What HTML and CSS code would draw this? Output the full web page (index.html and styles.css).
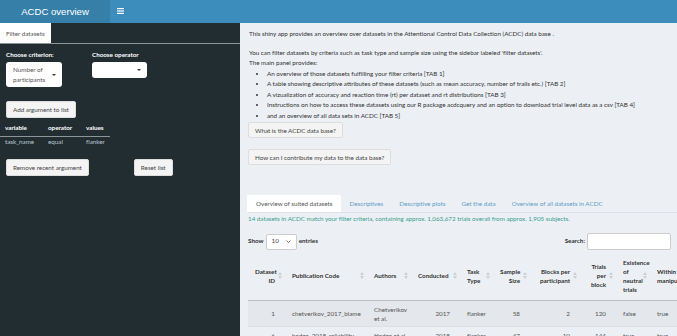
FILE: index.html
```html
<!DOCTYPE html>
<html lang="en">
<head>
    <meta charset="UTF-8">
    <title>ACDC overview</title>
    <link rel="stylesheet" href="styles.css">
</head>
<body>
    <!-- header -->
    <header class="top">
      <div class="logo">ACDC overview</div>
      <nav class="navbar">
        <svg class="burger" width="7" height="6" viewBox="0 0 7 6">
          <rect x="0" y="0" width="7" height="1.2" fill="#fff"/>
          <rect x="0" y="2.4" width="7" height="1.2" fill="#fff"/>
          <rect x="0" y="4.8" width="7" height="1.2" fill="#fff"/>
        </svg>
      </nav>
    </header>

    <div class="wrap">
      <!-- sidebar -->
      <aside class="side">
        <div class="side-tabs">
          <span class="side-tab">Filter datasets</span>
        </div>

        <div class="crit">
          <div class="fg">
            <label>Choose criterion:</label>
            <div class="sel sel-big">
              <span>Number of participants</span>
              <i class="caret"></i>
            </div>
          </div>
          <div class="fg">
            <label>Choose operator</label>
            <div class="sel sel-small">
              <span></span>
              <i class="caret"></i>
            </div>
          </div>
        </div>

        <button class="btn btn-add">Add argument to list</button>

        <table class="argtab">
          <thead>
            <tr><th>variable</th><th>operator</th><th>values</th></tr>
          </thead>
          <tbody>
            <tr><td>task_name</td><td>equal</td><td>flanker</td></tr>
          </tbody>
        </table>

        <div class="side-btns">
          <button class="btn">Remove recent argument</button>
          <button class="btn">Reset list</button>
        </div>
      </aside>

      <!-- main -->
      <main class="content">
        <p class="intro">This shiny app provides an overview over datasets in the Attentional Control Data Collection (ACDC) data base .</p>
        <p class="intro2">You can filter datasets by criteria such as task type and sample size using the sidebar labeled 'filter datasets'.<br>The main panel provides:</p>
        <ul class="feat">
          <li>An overview of those datasets fulfilling your filter criteria [TAB 1]</li>
          <li>A table showing descriptive attributes of these datasets (such as mean accuracy, number of trails etc.) [TAB 2]</li>
          <li>A vizualization of accuracy and reaction time (rt) per dataset and rt distributions [TAB 3]</li>
          <li>Instructions on how to access these datasets using our R package acdcquery and an option to download trial level data as a csv [TAB 4]</li>
          <li>and an overview of all data sets in ACDC [TAB 5]</li>
        </ul>

        <button class="btn btn-main">What is the ACDC data base?</button>
        <button class="btn btn-main btn-second">How can I contribute my data to the data base?</button>

        <ul class="tabs">
          <li class="active">Overview of suited datasets</li>
          <li>Descriptives</li>
          <li>Descriptive plots</li>
          <li>Get the data</li>
          <li>Overview of all datasets in ACDC</li>
        </ul>

        <p class="match">14 datasets in ACDC match your filter criteria, containing approx. 1,063,672 trials overall from approx. 1,905 subjects.</p>

        <div class="dt-top">
          <label class="len">Show <span class="len-sel">10 <svg width="5" height="3" viewBox="0 0 5 3"><path d="M0.5 0.5 L2.5 2.5 L4.5 0.5" fill="none" stroke="#555" stroke-width="0.8"/></svg></span> entries</label>
          <label class="search">Search: <span class="search-box"></span></label>
        </div>

        <table class="dt">
          <colgroup>
            <col style="width:37px"><col style="width:82px"><col style="width:44px"><col style="width:49px"><col style="width:33px">
            <col style="width:37px"><col style="width:50px"><col style="width:36px"><col style="width:34px"><col style="width:60px">
          </colgroup>
          <thead>
            <tr>
              <th class="num">Dataset ID</th>
              <th>Publication Code</th>
              <th>Authors</th>
              <th>Conducted</th>
              <th>Task Type</th>
              <th class="num">Sample Size</th>
              <th class="num">Blocks per participant</th>
              <th class="num">Trials per block</th>
              <th>Existence of neutral trials</th>
              <th>Within manipulation</th>
            </tr>
          </thead>
          <tbody>
            <tr class="odd">
              <td class="num">1</td><td>chetverikov_2017_blame</td><td>Chetverikov et al.</td><td class="num">2017</td><td>flanker</td>
              <td class="num">58</td><td class="num">2</td><td class="num">120</td><td>false</td><td>true</td>
            </tr>
            <tr>
              <td class="num">6</td><td>hedge_2018_reliability</td><td>Hedge et al.</td><td class="num">2018</td><td>flanker</td>
              <td class="num">47</td><td class="num">10</td><td class="num">144</td><td>true</td><td>true</td>
            </tr>
          </tbody>
        </table>
      </main>
    </div>
</body>
</html>
```

FILE: styles.css
```css
 *{
    box-sizing: border-box;
 }
 html, body{
    margin: 0;
    height: 100%;
    overflow: hidden;
 }
 body{
    font-family: Lato, "Noto Sans", sans-serif;
    font-size: 6.3px;
    letter-spacing: -0.02px;
    line-height: 10.5px;
    color: #333;
    background-color: #ecf0f5;
    display: flex;
    flex-direction: column;
 }

 /* header */
 .top{
    display: flex;
    height: 23px;
    flex-shrink: 0;
 }
 .logo{
    width: 110px;
    background-color: #367fa9;
    color: #fff;
    font-family: "Liberation Sans", Arial, sans-serif;
    font-size: 9.6px;
    letter-spacing: normal;
    line-height: 23px;
    text-align: center;
 }
 .navbar{
    flex: 1;
    background-color: #3c8dbc;
    padding: 8px 0 0 7px;
 }
 .burger{
    display: block;
 }

 .wrap{
    flex: 1;
    display: flex;
    min-height: 0;
 }

 /* sidebar */
 .side{
    width: 240px;
    flex-shrink: 0;
    background-color: #222d32;
    color: #b8c7ce;
 }
 .side-tabs{
    height: 21px;
    border-bottom: 1px solid #8d9598;
 }
 .side-tab{
    display: inline-block;
    height: 20px;
    padding: 0 6px;
    background-color: #fff;
    color: #555;
    line-height: 21px;
 }
 .crit{
    display: grid;
    grid-template-columns: 86px 86px;
    padding: 6px 0 0 6px;
 }
 .fg label{
    display: block;
    color: #fff;
    font-weight: bold;
    line-height: 10px;
    margin-bottom: 2px;
 }
 .sel{
    position: relative;
    background-color: #fff;
    border-radius: 3px;
    color: #555;
 }
 .sel-big{
    width: 56px;
    height: 25px;
    padding: 3px 14px 0 7px;
    line-height: 10px;
 }
 .sel-small{
    width: 55px;
    height: 16px;
 }
 .caret{
    position: absolute;
    top: 50%;
    right: 6px;
    margin-top: -1px;
    border-top: 2.5px solid #333;
    border-left: 2.5px solid transparent;
    border-right: 2.5px solid transparent;
 }

 .btn{
    font-family: inherit;
    font-size: 6.3px;
    letter-spacing: inherit;
    color: #444;
    background-color: #f4f4f4;
    border: 1px solid #ddd;
    border-radius: 2px;
    height: 17px;
    padding: 0 6px;
    line-height: 15px;
    cursor: pointer;
 }
 .btn-add{
    display: block;
    margin: 14px 0 0 6px;
 }

 .argtab{
    border-collapse: collapse;
    margin-top: 4px;
 }
 .argtab th{
    color: #fff;
    font-weight: bold;
    text-align: left;
    padding: 1px 5px 2px 5px;
    border-bottom: 1px solid #8d9598;
 }
 .argtab td{
    padding: 0 5px;
 }
 .argtab th:first-child,
 .argtab td:first-child{ width: 43px; }
 .argtab th:nth-child(2),
 .argtab td:nth-child(2){ width: 38px; }

 .side-btns{
    display: flex;
    gap: 45px;
    padding: 12px 0 0 6px;
 }

 /* main */
 .content{
    flex: 1;
    min-width: 0;
    overflow: hidden;
    padding: 6px 0 0 8px;
 }
 .content p{
    margin: 0;
 }
 .intro{
    margin-bottom: 8px !important;
    padding-left: 1px;
 }
 .intro2{
    padding-left: 1px;
 }
 .feat{
    margin: 0;
    padding-left: 19px;
 }
 .btn-main{
    display: block;
    height: 16px;
    margin-top: 1px;
 }
 .btn-second{
    margin-top: 11px;
 }

 .tabs{
    list-style: none;
    margin: 30px 0 0 0;
    padding: 0;
    display: flex;
    border-bottom: 1px solid #dde2e8;
 }
 .tabs li{
    padding: 0 8px;
    height: 17px;
    line-height: 17px;
    color: #5f9dc6;
 }
 .tabs li.active{
    background-color: #fff;
    color: #555;
    padding: 0 9px;
    margin-left: -1px;
 }

 .match{
    color: #3a9d90;
    line-height: 11px;
 }

 .dt-top{
    display: flex;
    justify-content: space-between;
    align-items: center;
    margin-top: 9px;
    width: 423px;
 }
 .dt-top label{
    font-weight: bold;
    display: flex;
    align-items: center;
    gap: 2px;
 }
 .len-sel{
    display: inline-flex;
    align-items: center;
    gap: 7px;
    height: 16px;
    padding: 0 5px 0 5px;
    border: 1px solid #ccc;
    border-radius: 2px;
    background-color: #fff;
    font-weight: normal;
    color: #444;
 }
 .search-box{
    display: inline-block;
    width: 84px;
    height: 17px;
    background-color: #fff;
    border: 1px solid #ccc;
    border-radius: 2px;
 }

 .dt{
    table-layout: fixed;
    border-collapse: collapse;
    width: 462px;
    margin-top: 2px;
    line-height: 9px;
 }
 .dt th{
    font-weight: bold;
    text-align: left;
    vertical-align: middle;
    padding: 5px 10px 5px 7px;
    border-bottom: 1px solid #b9bcc0;
    height: 48px;
    background-image: url("data:image/svg+xml,%3Csvg xmlns='http://www.w3.org/2000/svg' width='4' height='7' viewBox='0 0 4 7'%3E%3Cpath d='M2 0 L4 3 L0 3 Z M0 4 L4 4 L2 7 Z' fill='%23ccd0d4'/%3E%3C/svg%3E");
    background-repeat: no-repeat;
    background-position: right 3px center;
 }
 .dt td{
    padding: 4px 4px 3px 7px;
    vertical-align: middle;
    color: #555;
    border-top: 1px solid #dcdfe3;
 }
 .dt td.num{
    padding-right: 10px;
 }
 .dt .num{
    text-align: right;
 }
 .dt tr.odd td{
    background-color: #e4e7eb;
 }
```
